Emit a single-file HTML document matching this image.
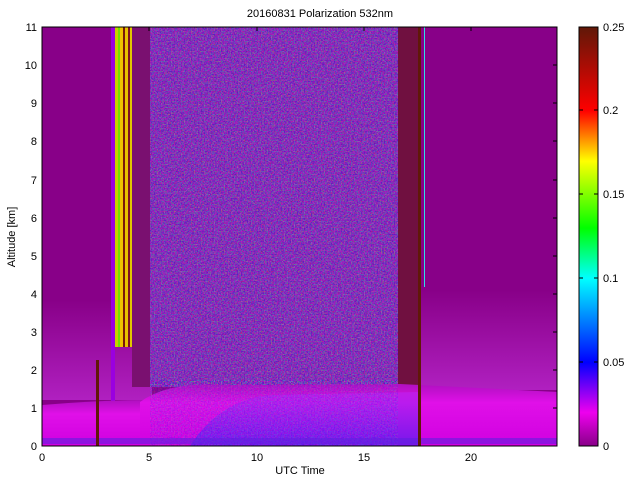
<!DOCTYPE html>
<html><head><style>
html,body{margin:0;padding:0;background:#fff;width:640px;height:480px;overflow:hidden}
svg{display:block}
text{font-family:"Liberation Sans",sans-serif;fill:#000}
</style></head><body>
<svg width="640" height="480" viewBox="0 0 640 480">
<defs>
<filter id="nz" x="0" y="0" width="100%" height="100%">
<feTurbulence type="fractalNoise" baseFrequency="0.7" numOctaves="1" seed="3" result="t"/>
<feColorMatrix type="matrix" values="3 -2 0 0 -0.35  0 3 -1.5 0 -0.7  -1 0 3 0 -0.2  0 0 0 0 1" in="t"/>
</filter>
<linearGradient id="cb" x1="0" y1="1" x2="0" y2="0">
<stop offset="0" stop-color="#880088"/>
<stop offset="0.08" stop-color="#ee00ee"/>
<stop offset="0.2" stop-color="#0000ff"/>
<stop offset="0.4" stop-color="#00ffff"/>
<stop offset="0.52" stop-color="#00ff00"/>
<stop offset="0.68" stop-color="#ffff00"/>
<stop offset="0.8" stop-color="#ff0000"/>
<stop offset="1" stop-color="#601808"/>
</linearGradient>
<linearGradient id="low" x1="0" y1="0" x2="0" y2="1">
<stop offset="0" stop-color="#b010c0"/>
<stop offset="0.3" stop-color="#e010e8"/>
<stop offset="1" stop-color="#d000e0"/>
</linearGradient>
<linearGradient id="blu" x1="0" y1="0" x2="0" y2="1">
<stop offset="0" stop-color="#c020f0"/>
<stop offset="1" stop-color="#5020f0"/>
</linearGradient>
<linearGradient id="fadeL" x1="0" y1="0" x2="0" y2="1">
<stop offset="0" stop-color="#880088"/>
<stop offset="1" stop-color="#b020c0"/>
</linearGradient>
<clipPath id="pc"><rect x="42" y="27" width="515" height="419"/></clipPath>
</defs>
<text x="320" y="17" font-size="11" text-anchor="middle">20160831 Polarization 532nm</text>
<g clip-path="url(#pc)">
<rect x="42" y="27" width="515" height="419" fill="#880088"/>
<rect x="420" y="290" width="137" height="100" fill="url(#fadeL)"/>
<rect x="42" y="300" width="110" height="100" fill="url(#fadeL)"/>
<rect x="150" y="27" width="248" height="360" fill="#9028a8"/>
<rect x="150" y="27" width="248" height="360" filter="url(#nz)" opacity="0.3"/>
<rect x="132" y="27" width="18" height="360" fill="#7a1070"/>
<rect x="111" y="27" width="4" height="400" fill="#9a00e0"/>
<rect x="115" y="27" width="3" height="320" fill="#c8d000"/>
<rect x="118" y="27" width="2" height="320" fill="#70e000"/>
<rect x="120" y="27" width="3" height="320" fill="#f0c000"/>
<rect x="123" y="27" width="2" height="320" fill="#7a1808"/>
<rect x="125" y="27" width="3" height="320" fill="#e8c000"/>
<rect x="128" y="27" width="2" height="320" fill="#801020"/>
<rect x="130" y="27" width="2" height="320" fill="#e0c800"/>
<rect x="398" y="27" width="20" height="380" fill="#701040"/>
<rect x="424" y="27" width="1" height="260" fill="#30e0e0"/>
<path d="M42 446 L42 405 Q100 400 150 400 L150 446 Z" fill="url(#low)"/>
<path d="M140 446 L140 402 Q170 380 230 385 L400 384 L557 392 L557 446 Z" fill="url(#low)"/>
<path d="M190 446 Q220 400 270 395 L420 392 L420 446 Z" fill="url(#blu)" opacity="0.7"/>
<rect x="150" y="380" width="248" height="66" filter="url(#nz)" opacity="0.15"/>
<rect x="42" y="438" width="515" height="6" fill="#6020e0" opacity="0.6"/>
<rect x="96" y="360" width="3" height="86" fill="#601808"/>
<rect x="418" y="27" width="3" height="419" fill="#601808"/>
</g>
<rect x="42" y="27" width="515" height="419" fill="none" stroke="#000" stroke-width="1"/>
<g font-size="11" text-anchor="end">
<text x="37" y="450">0</text><text x="37" y="412">1</text><text x="37" y="374">2</text>
<text x="37" y="336">3</text><text x="37" y="298">4</text><text x="37" y="260">5</text>
<text x="37" y="222">6</text><text x="37" y="184">7</text><text x="37" y="145">8</text>
<text x="37" y="107">9</text><text x="37" y="69">10</text><text x="37" y="31">11</text>
</g>
<g font-size="11" text-anchor="middle">
<text x="42" y="461">0</text><text x="149" y="461">5</text><text x="257" y="461">10</text>
<text x="364" y="461">15</text><text x="471" y="461">20</text>
<text x="300" y="474">UTC Time</text>
</g>
<text x="15" y="237" font-size="11" text-anchor="middle" transform="rotate(-90 15 237)">Altitude [km]</text>
<g stroke="#000" stroke-width="1">
<line x1="553" y1="408" x2="557" y2="408"/><line x1="553" y1="370" x2="557" y2="370"/>
<line x1="553" y1="332" x2="557" y2="332"/><line x1="553" y1="294" x2="557" y2="294"/>
<line x1="553" y1="256" x2="557" y2="256"/><line x1="553" y1="218" x2="557" y2="218"/>
<line x1="553" y1="180" x2="557" y2="180"/><line x1="553" y1="141" x2="557" y2="141"/>
<line x1="553" y1="103" x2="557" y2="103"/><line x1="553" y1="65" x2="557" y2="65"/>
<line x1="149" y1="27" x2="149" y2="31"/><line x1="257" y1="27" x2="257" y2="31"/>
<line x1="364" y1="27" x2="364" y2="31"/><line x1="471" y1="27" x2="471" y2="31"/>
</g>
<rect x="579" y="27" width="19" height="419" fill="url(#cb)" stroke="#000" stroke-width="1"/>
<g stroke="#000"><line x1="579" y1="110" x2="583" y2="110"/><line x1="594" y1="110" x2="598" y2="110"/>
<line x1="579" y1="194" x2="583" y2="194"/><line x1="594" y1="194" x2="598" y2="194"/>
<line x1="579" y1="278" x2="583" y2="278"/><line x1="594" y1="278" x2="598" y2="278"/>
<line x1="579" y1="362" x2="583" y2="362"/><line x1="594" y1="362" x2="598" y2="362"/></g>
<g font-size="11">
<text x="603" y="31">0.25</text><text x="603" y="114">0.2</text><text x="603" y="198">0.15</text>
<text x="603" y="282">0.1</text><text x="603" y="366">0.05</text><text x="603" y="450">0</text>
</g>
</svg>
</body></html>
